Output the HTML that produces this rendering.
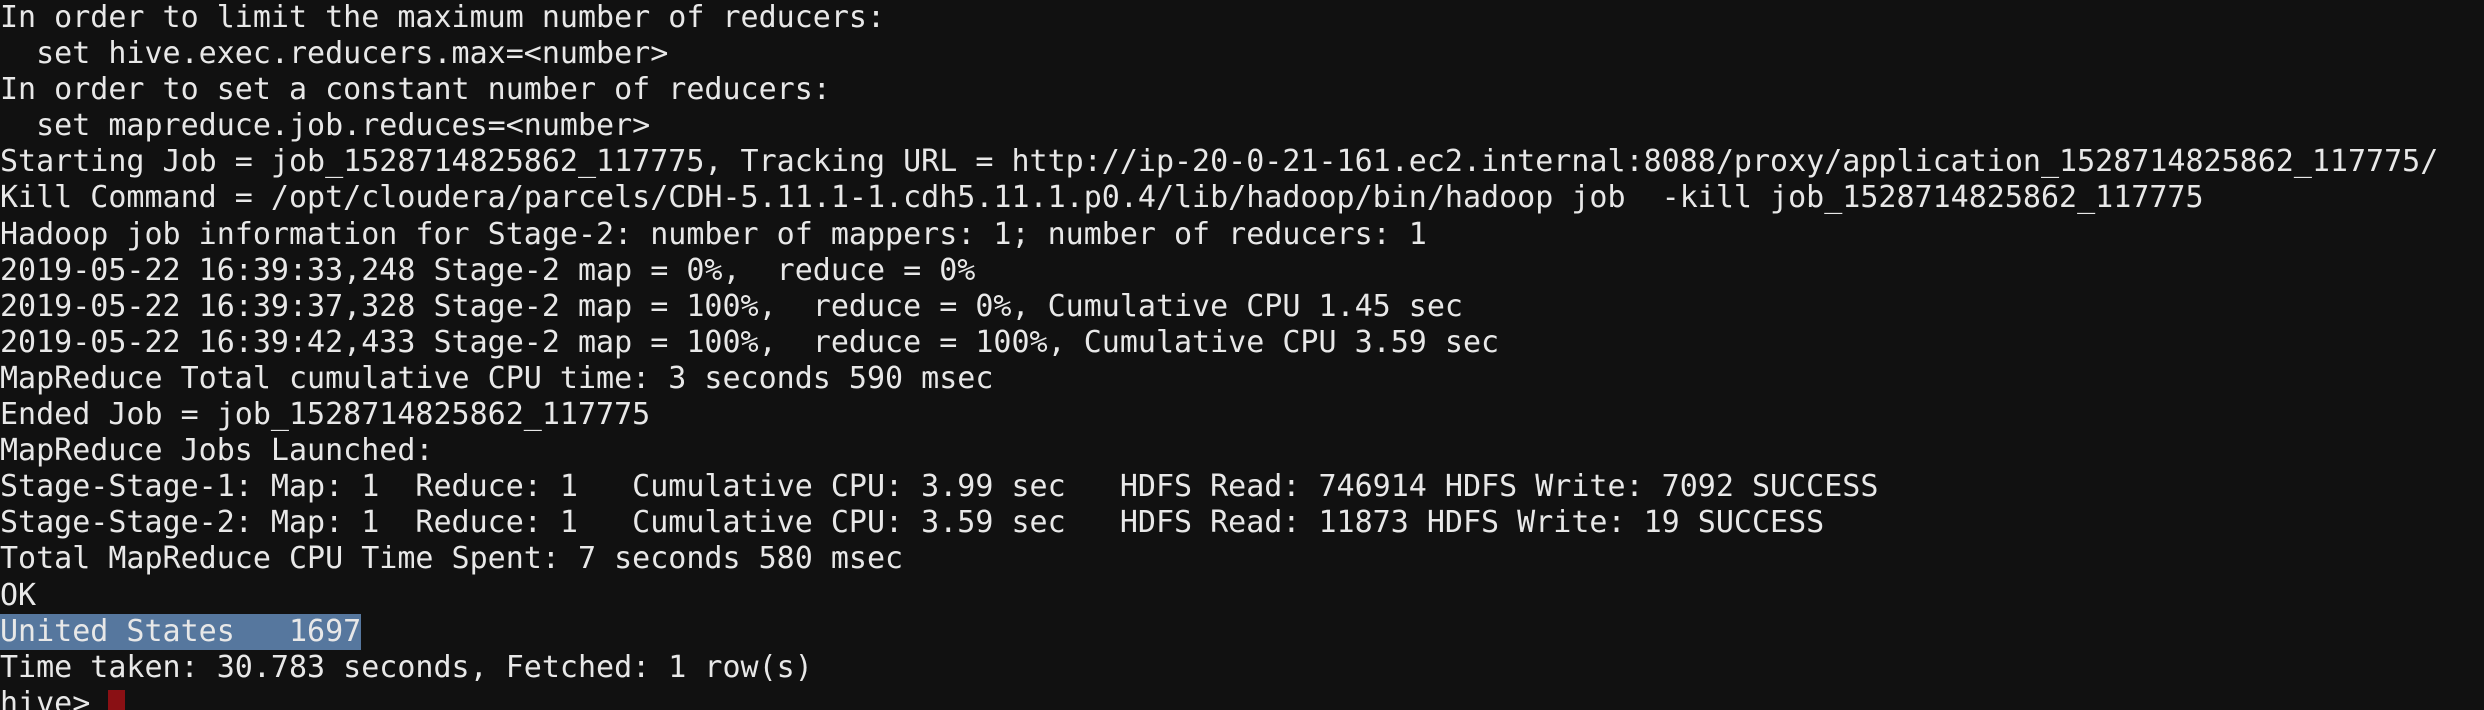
<!DOCTYPE html>
<html><head><meta charset="utf-8"><style>
html,body{margin:0;padding:0;background:#111111;width:2484px;height:710px;overflow:hidden}
pre{margin:0;padding:0;font-family:"DejaVu Sans Mono","Liberation Mono",monospace;font-size:30px;line-height:36.1px;color:#e8e8e8;white-space:pre}
.hl{background:#56779e;display:inline-block;height:36px;vertical-align:top}
.cur{display:inline-block;width:17px;height:30px;background:#8a1014;vertical-align:top;margin-top:4px}
</style></head><body><pre>In order to limit the maximum number of reducers:
  set hive.exec.reducers.max=&lt;number&gt;
In order to set a constant number of reducers:
  set mapreduce.job.reduces=&lt;number&gt;
Starting Job = job_1528714825862_117775, Tracking URL = http://ip-20-0-21-161.ec2.internal:8088/proxy/application_1528714825862_117775/
Kill Command = /opt/cloudera/parcels/CDH-5.11.1-1.cdh5.11.1.p0.4/lib/hadoop/bin/hadoop job  -kill job_1528714825862_117775
Hadoop job information for Stage-2: number of mappers: 1; number of reducers: 1
2019-05-22 16:39:33,248 Stage-2 map = 0%,  reduce = 0%
2019-05-22 16:39:37,328 Stage-2 map = 100%,  reduce = 0%, Cumulative CPU 1.45 sec
2019-05-22 16:39:42,433 Stage-2 map = 100%,  reduce = 100%, Cumulative CPU 3.59 sec
MapReduce Total cumulative CPU time: 3 seconds 590 msec
Ended Job = job_1528714825862_117775
MapReduce Jobs Launched:
Stage-Stage-1: Map: 1  Reduce: 1   Cumulative CPU: 3.99 sec   HDFS Read: 746914 HDFS Write: 7092 SUCCESS
Stage-Stage-2: Map: 1  Reduce: 1   Cumulative CPU: 3.59 sec   HDFS Read: 11873 HDFS Write: 19 SUCCESS
Total MapReduce CPU Time Spent: 7 seconds 580 msec
OK
<span class="hl">United States   1697</span>
Time taken: 30.783 seconds, Fetched: 1 row(s)
hive&gt; <span class="cur"></span></pre></body></html>
